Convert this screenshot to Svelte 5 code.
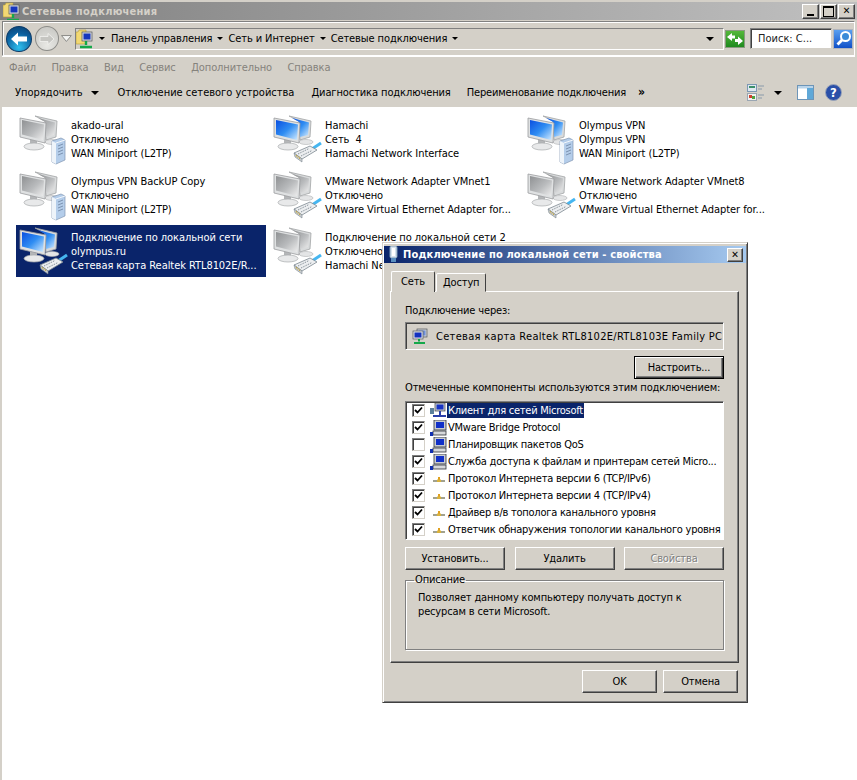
<script>
  const adapters = [
    { lines: ['akado-ural', 'Отключено', 'WAN Miniport (L2TP)'], active: false, badge: 'server' },
    { lines: ['Hamachi', 'Сеть  4', 'Hamachi Network Interface'], active: true, badge: 'cable' },
    { lines: ['Olympus VPN', 'Olympus VPN', 'WAN Miniport (L2TP)'], active: true, badge: 'server' },
    { lines: ['Olympus VPN BackUP Copy', 'Отключено', 'WAN Miniport (L2TP)'], active: false, badge: 'server' },
    { lines: ['VMware Network Adapter VMnet1', 'Отключено', 'VMware Virtual Ethernet Adapter for...'], active: false, badge: 'cable' },
    { lines: ['VMware Network Adapter VMnet8', 'Отключено', 'VMware Virtual Ethernet Adapter for...'], active: false, badge: 'cable' },
    { lines: ['Подключение по локальной сети', 'olympus.ru', 'Сетевая карта Realtek RTL8102E/R...'], active: true, badge: 'cable', selected: true },
    { lines: ['Подключение по локальной сети 2', 'Отключено', 'Hamachi Network Interface'], active: false, badge: 'cable' }
  ];

  const components = [
    { name: 'Клиент для сетей Microsoft', on: true, icon: 'client', selected: true },
    { name: 'VMware Bridge Protocol', on: true, icon: 'pc' },
    { name: 'Планировщик пакетов QoS', on: false, icon: 'pc' },
    { name: 'Служба доступа к файлам и принтерам сетей Micro...', on: true, icon: 'pc' },
    { name: 'Протокол Интернета версии 6 (TCP/IPv6)', on: true, icon: 'proto' },
    { name: 'Протокол Интернета версии 4 (TCP/IPv4)', on: true, icon: 'proto' },
    { name: 'Драйвер в/в тополога канального уровня', on: true, icon: 'proto' },
    { name: 'Ответчик обнаружения топологии канального уровня', on: true, icon: 'proto' }
  ];

  const menu = ['Файл', 'Правка', 'Вид', 'Сервис', 'Дополнительно', 'Справка'];
  const crumbs = ['Панель управления', 'Сеть и Интернет', 'Сетевые подключения'];
</script>

{#snippet netIcon(active, badge, id)}
  <svg class="net-icon" width="54" height="52" viewBox="0 0 54 52">
    <defs>
      <linearGradient id={id} x1="0" y1="0" x2="1" y2="1">
        <stop offset="0" stop-color="#0a4fe0" />
        <stop offset=".5" stop-color="#2f8df2" />
        <stop offset="1" stop-color="#d5ecff" />
      </linearGradient>
    </defs>
    <!-- back monitor -->
    <path d="M19 3 L41 8 L40 24 L30 27 L29 8 Z" fill="#d9dbdc" stroke="#a2a4a6" stroke-width=".8" />
    <path d="M22 5 L39 9.500 L38 22 L30 24 L29 9 Z" fill={active ? `url(#${id})` : 'url(#scrGrey)'} />
    <ellipse cx="36" cy="29" rx="7" ry="2.500" fill="#e4e5e6" stroke="#b0b2b4" stroke-width=".6" />
    <!-- front monitor -->
    <path d="M14 26 L21 28 L21 32 L14 31 Z" fill="#b4b6b8" />
    <ellipse cx="18" cy="33.500" rx="10" ry="3.500" fill="#e8e9ea" stroke="#a8aaac" stroke-width=".7" />
    <path d="M4 5 L30 10 L29 30 L4 24 Z" fill="#dfe1e2" stroke="#9a9c9e" stroke-width=".8" />
    <path d="M6 7 L28 11.500 L27 27 L6 21.500 Z" fill={active ? `url(#${id})` : 'url(#scrGrey)'} />
    {#if badge === 'server'}
      <path d="M36 28 L45 25 L49 27 L49 47 L40 51 L36 49 Z" fill="#b4cdea" stroke="#8297b2" stroke-width=".7" />
      <path d="M36 28 L40 30 L40 51 L36 49 Z" fill="#eef4fa" />
      <path d="M40 30 L49 27" stroke="#f2f6fb" stroke-width="1" />
      <path d="M42 33 L47 31 M42 36 L47 34 M42 39 L47 37 M42 42 L47 40" stroke="#7b92b0" stroke-width="1" />
    {:else}
      <path d="M42 36 L51 30" stroke="#46b6f0" stroke-width="3" fill="none" />
      <path d="M24 40 L40 33 L47 37 L32 46 Z" fill="#eceef0" stroke="#7c8890" stroke-width=".8" />
      <path d="M24 40 L32 46 L32 49 L25 44 Z" fill="#c9cdd0" stroke="#7c8890" stroke-width=".6" />
      <path d="M28 41 L39 35.500 M31 43 L42 37.500" stroke="#8a949c" stroke-width="1" stroke-dasharray="1.500 1" />
      <path d="M26 42.500 L30 45.500" stroke="#c9a52c" stroke-width="1.400" stroke-dasharray="1 1" />
    {/if}
  </svg>
{/snippet}

{#snippet smallNet(size)}
  <svg width={size} height={size} viewBox="0 0 16 16">
    <rect x="5" y="1" width="10" height="8" fill="#c9cdd2" stroke="#55595e" stroke-width=".7" />
    <rect x="6.500" y="2.500" width="7" height="5" fill="#6f8fd8" />
    <rect x="1" y="3" width="10" height="8" fill="#e2e4e6" stroke="#55595e" stroke-width=".7" />
    <rect x="2.500" y="4.500" width="7" height="5" fill="#1330c0" />
    <path d="M7 11 V13.500 M2 15 H13" stroke="#15a84a" stroke-width="2" />
  </svg>
{/snippet}

{#snippet folderNet()}
  <svg width="17" height="21" viewBox="0 0 17 21">
    <path d="M0 3 H2 L3 1 H10 V15 H0 Z" fill="#f2d873" stroke="#b39a3a" stroke-width=".6" />
    <rect x="6" y="3" width="10" height="9" fill="#d8dade" stroke="#50545a" stroke-width=".7" />
    <rect x="7.500" y="4.500" width="7" height="6" fill="#1636bd" />
    <path d="M10 12 V16 M4 18 H16" stroke="#15a84a" stroke-width="2.400" />
  </svg>
{/snippet}

{#snippet rowIcon(kind)}
  {#if kind === 'client'}
    <svg width="17" height="16" viewBox="0 0 17 16">
      <rect x="0" y="5" width="4" height="6" fill="#5b7f9a" />
      <rect x="5" y="0" width="10" height="8" fill="#c7ccd3" stroke="#3c4048" stroke-width=".7" />
      <rect x="6.500" y="1.500" width="7" height="5" fill="#1733c4" />
      <path d="M10 8 V12 M3 13 H16" stroke="#2a3fa8" stroke-width="2" />
    </svg>
  {:else if kind === 'pc'}
    <svg width="17" height="16" viewBox="0 0 17 16">
      <rect x="4" y="0" width="12" height="10" fill="#c9ccd0" stroke="#30343a" stroke-width=".8" />
      <rect x="6" y="2" width="8" height="6" fill="#1130c8" />
      <rect x="3" y="11" width="13" height="4" fill="#d6d8da" stroke="#30343a" stroke-width=".8" />
      <rect x="0" y="12" width="3" height="4" fill="#1130b0" />
    </svg>
  {:else}
    <svg width="17" height="16" viewBox="0 0 17 16">
      <path d="M3 10 H15" stroke="#8a8a72" stroke-width="1.600" />
      <path d="M9 6 V9" stroke="#e0a020" stroke-width="2" />
      <rect x="7" y="8.500" width="4" height="2.500" fill="#d9b23c" />
    </svg>
  {/if}
{/snippet}

<svg class="defs" width="0" height="0">
  <defs>
    <linearGradient id="scrGrey" x1="0" y1="0" x2="1" y2="1">
      <stop offset="0" stop-color="#8f9193" />
      <stop offset=".55" stop-color="#b9bbbd" />
      <stop offset="1" stop-color="#eeeeee" />
    </linearGradient>
  </defs>
</svg>

<div class="window">
  <header class="titlebar">
    <span class="title-icon">{@render folderNet()}</span>
    <span class="title-text">Сетевые подключения</span>
    <div class="win-btns">
      <button class="wb"><i class="min"></i></button>
      <button class="wb"><i class="max"></i></button>
      <button class="wb x">✕</button>
    </div>
  </header>

  <div class="navbar">
    <span class="round back">
      <svg width="18" height="16" viewBox="0 0 18 16"><path d="M1 8 L8 1.500 V5.500 H17 V10.500 H8 V14.500 Z" fill="#fff" /></svg>
    </span>
    <span class="round fwd">
      <svg width="16" height="14" viewBox="0 0 16 14"><path d="M15 7 L9 1.500 V4.500 H1 V9.500 H9 V12.500 Z" fill="#c6c6c2" stroke="#f2f2f0" stroke-width=".8" /></svg>
    </span>
    <svg class="hist" width="11" height="7" viewBox="0 0 11 7"><path d="M.5 .5 H10.500 L5.500 6.500 Z" fill="#f4f4f2" stroke="#8a8a86" /></svg>
    <div class="address">
      <span class="addr-icon">{@render folderNet()}</span>
      <span class="tri first"></span>
      {#each crumbs as c}
        <span class="crumb">{c}</span>
        <span class="tri"></span>
      {/each}
      <span class="tri end"></span>
    </div>
    <span class="go">
      <svg width="18" height="14" viewBox="0 0 18 14"><path d="M1 5 L6 1 V3.500 H9 V6.500 H6 V9 Z M17 9 L12 13 V10 H9 V7 H12 V4.500 Z" fill="#fff" /></svg>
    </span>
    <div class="search"><span>Поиск: С...</span></div>
    <span class="search-btn">
      <svg width="17" height="17" viewBox="0 0 17 17">
        <circle cx="10.500" cy="6.500" r="4.500" fill="#3a8ad8" stroke="#fff" stroke-width="2" />
        <path d="M7 10 L2.500 14.500" stroke="#fff" stroke-width="2.800" />
      </svg>
    </span>
  </div>

  <nav class="menu">
    {#each menu as m}<span>{m}</span>{/each}
  </nav>

  <div class="toolbar">
    <span class="tool organize">Упорядочить</span>
    <span class="tri big"></span>
    <span class="tool t-off">Отключение сетевого устройства</span>
    <span class="tool t-diag">Диагностика подключения</span>
    <span class="tool t-ren">Переименование подключения</span>
    <span class="more">»</span>
    <div class="tool-right">
      <svg width="17" height="17" viewBox="0 0 17 17">
        <rect x=".5" y=".5" width="9" height="7" fill="#dfe8f0" stroke="#7c98b4" />
        <rect x="2" y="2" width="6" height="2" fill="#3a8f6a" />
        <rect x=".5" y="9.500" width="9" height="7" fill="#f2f2f2" stroke="#9aa6b2" />
        <rect x="2" y="11" width="3" height="3" fill="#d04030" />
        <rect x="5" y="12" width="3" height="3" fill="#50a040" />
        <path d="M11 2 H17 M11 5 H15 M11 11 H17 M11 14 H15" stroke="#8a9aaa" />
      </svg>
      <span class="tri big view"></span>
      <svg class="pane" width="17" height="15" viewBox="0 0 17 15">
        <rect x=".5" y=".5" width="16" height="14" fill="#fff" stroke="#6d95b8" />
        <rect x="1" y="1" width="15" height="2.500" fill="#b9d4ea" />
        <rect x="10" y="3" width="6" height="11" fill="#5fa8d8" />
      </svg>
      <svg width="17" height="17" viewBox="0 0 17 17">
        <circle cx="8.500" cy="8.500" r="8" fill="#2a4fa8" stroke="#9aa4b8" />
        <text class="help-q" x="8.500" y="13" text-anchor="middle">?</text>
      </svg>
    </div>
  </div>

  <main class="content">
    {#each adapters as a, i}
      <div class="item" class:selected={a.selected}>
        {@render netIcon(a.active, a.badge, `scr${i}`)}
        <div class="item-text">
          {#each a.lines as l}<div class="item-line">{l}</div>{/each}
        </div>
      </div>
    {/each}
  </main>

  <section class="dialog">
    <header class="dlg-title">
      <svg width="13" height="17" viewBox="0 0 13 17">
        <rect x="3" y="0" width="7" height="12" rx="1.500" fill="#d8e4ee" stroke="#7d9ab5" />
        <rect x="5" y="2" width="3" height="8" fill="#fff" />
        <rect x="4" y="12" width="5" height="4" fill="#5a8fc0" />
      </svg>
      <span class="dlg-title-text">Подключение по локальной сети - свойства</span>
      <button class="wb x dlg-x">✕</button>
    </header>

    <div class="tabs">
      <span class="tab active">Сеть</span>
      <span class="tab">Доступ</span>
    </div>

    <div class="panel">
      <div class="lbl">Подключение через:</div>
      <div class="device">
        {@render smallNet(16)}
        <span class="device-name">Сетевая карта Realtek RTL8102E/RTL8103E Family PC</span>
      </div>
      <div class="cfg-row"><button class="btn default">Настроить...</button></div>
      <div class="lbl comps">Отмеченные компоненты используются этим подключением:</div>
      <div class="list">
        {#each components as c}
          <div class="row">
            <span class="check">
              {#if c.on}
                <svg width="9" height="9" viewBox="0 0 9 9"><path d="M1 4 L3.500 6.500 L8 1.500" fill="none" stroke="#000" stroke-width="1.800" /></svg>
              {/if}
            </span>
            <span class="row-icon">{@render rowIcon(c.icon)}</span>
            <span class="row-name" class:hl={c.selected}>{c.name}</span>
          </div>
        {/each}
      </div>
      <div class="btn-row">
        <button class="btn">Установить...</button>
        <button class="btn">Удалить</button>
        <button class="btn disabled">Свойства</button>
      </div>
      <fieldset class="group">
        <legend>Описание</legend>
        <p>Позволяет данному компьютеру получать доступ к ресурсам в сети Microsoft.</p>
      </fieldset>
    </div>

    <footer class="dlg-foot">
      <button class="btn foot">OK</button>
      <button class="btn foot">Отмена</button>
    </footer>
  </section>
</div>

<style>
  :global(body) {
    margin: 0;
    background: #fff;
  }
  .defs {
    position: absolute;
  }
  .window {
    position: relative;
    width: 857px;
    height: 780px;
    overflow: hidden;
    display: flex;
    flex-direction: column;
    background: #d4d0c8;
    box-sizing: border-box;
    padding: 2px 2px 0;
    font-family: "DejaVu Sans Condensed", "DejaVu Sans", sans-serif;
    font-stretch: condensed;
    font-size: 11px;
    color: #000;
  }
  button {
    font: inherit;
    letter-spacing: inherit;
    padding: 0;
    margin: 0;
  }

  /* title bar */
  .titlebar {
    height: 18px;
    margin: 0 -2px 0 -2px;
    padding: 0 2px;
    display: flex;
    align-items: center;
    background: linear-gradient(90deg, #808080, #c0c0c0);
    flex-shrink: 0;
  }
  .title-icon {
    display: flex;
    margin-left: 1px;
    height: 18px;
    overflow: hidden;
  }
  .title-text {
    margin-left: 2px;
    color: #d4d0c8;
    font-weight: 700;
    font-size: 11px;
    letter-spacing: .25px;
  }
  .win-btns {
    margin-left: auto;
    display: flex;
    gap: 1px;
  }
  .wb {
    width: 17px;
    height: 15px;
    box-sizing: border-box;
    background: #d4d0c8;
    border: 1px solid;
    border-color: #fff #404040 #404040 #fff;
    box-shadow: inset -1px -1px 0 #808080;
    display: flex;
    align-items: center;
    justify-content: center;
    font-size: 10px;
    font-weight: 700;
    line-height: 1;
  }
  .wb .min {
    width: 7px;
    height: 2px;
    background: #000;
    margin-top: 7px;
  }
  .wb .max {
    width: 9px;
    height: 8px;
    border: 1px solid #000;
    border-top-width: 2px;
    box-sizing: content-box;
  }

  /* nav */
  .navbar {
    height: 35px;
    margin: 1px 0;
    box-sizing: border-box;
    border: 1px solid #808080;
    border-bottom-color: #fff;
    border-right-color: #fff;
    box-shadow: inset 1px 1px 0 #fff, 0 1px 0 #fff;
    display: flex;
    align-items: center;
    padding: 0 1px 0 3px;
    flex-shrink: 0;
  }
  .round {
    border-radius: 50%;
    display: flex;
    align-items: center;
    justify-content: center;
    box-sizing: border-box;
  }
  .back {
    width: 26px;
    height: 26px;
    background: radial-gradient(circle at 50% 85%, #2fc0ee, #0b5f9e 60%, #0a3f70);
    border: 1px solid #0a3a68;
  }
  .fwd {
    width: 25px;
    height: 25px;
    margin-left: 3px;
    background: radial-gradient(circle at 50% 80%, #e8e8e4, #c4c4c0);
    border: 1px solid #8c8c88;
  }
  .hist {
    margin-left: 2px;
  }
  .address {
    margin-left: 3px;
    width: 649px;
    height: 22px;
    box-sizing: border-box;
    border: 1px solid #808080;
    border-right-color: #fff;
    border-bottom-color: #fff;
    display: flex;
    align-items: center;
    flex-shrink: 0;
    letter-spacing: -.1px;
  }
  .addr-icon {
    display: flex;
    height: 20px;
    overflow: hidden;
    margin-top: 1px;
  }
  .tri {
    width: 0;
    height: 0;
    flex-shrink: 0;
    border-style: solid;
    border-width: 3px 3px 0;
    border-color: #000 transparent transparent;
    margin: 0 5px;
  }
  .tri.first {
    margin-left: 6px;
    margin-right: 6px;
  }
  .tri.end {
    margin-left: auto;
    margin-right: 9px;
    border-width: 4px 4.500px 0;
  }
  .tri.big {
    border-width: 4px 4px 0;
  }
  .go {
    width: 20px;
    height: 18px;
    margin-left: 1px;
    box-sizing: border-box;
    border: 1px solid #8a9a80;
    background: linear-gradient(#55b83a, #1e8a1e);
    display: flex;
    align-items: center;
    justify-content: center;
    flex-shrink: 0;
  }
  .search {
    margin-left: 5px;
    width: 82px;
    height: 21px;
    box-sizing: border-box;
    background: #fff;
    border: 1px solid #808080;
    border-right-color: #d4d0c8;
    border-bottom-color: #d4d0c8;
    box-shadow: inset 1px 1px 0 #404040;
    display: flex;
    align-items: center;
    padding-left: 7px;
    flex-shrink: 0;
    color: #222;
  }
  .search-btn {
    width: 20px;
    height: 20px;
    margin-left: 1px;
    border: 1px solid #b0b4bc;
    box-sizing: border-box;
    background: linear-gradient(#5aa0f0, #0f50c8);
    display: flex;
    align-items: center;
    justify-content: center;
    flex-shrink: 0;
  }

  /* menu and toolbar */
  .menu {
    height: 21px;
    display: flex;
    align-items: center;
    gap: 15.500px;
    padding-left: 7px;
    color: #85827c;
    letter-spacing: -.1px;
    flex-shrink: 0;
  }
  .toolbar {
    height: 29px;
    display: flex;
    align-items: center;
    padding-left: 13px;
    flex-shrink: 0;
  }
  .tool {
    white-space: nowrap;
  }
  .organize + .tri {
    margin: 0 0 0 8px;
  }
  .t-off {
    margin-left: 19px;
  }
  .t-diag {
    margin-left: 17px;
    letter-spacing: -.1px;
  }
  .t-ren {
    margin-left: 16px;
    letter-spacing: -.15px;
  }
  .more {
    margin-left: 12px;
    font-weight: 700;
    font-size: 12px;
    margin-top: -2px;
  }
  .tool-right {
    margin-left: auto;
    margin-right: 13px;
    display: flex;
    align-items: center;
  }
  .tri.view {
    margin: 0 15px 0 10px;
  }
  .pane {
    margin-right: 11px;
  }
  .help-q {
    font-size: 13px;
    font-weight: 700;
    fill: #fff;
  }

  /* adapters */
  .content {
    flex: 1;
    margin-right: -2px;
    background: #fff;
    display: grid;
    grid-template-columns: repeat(3, 250px);
    grid-auto-rows: 52px;
    gap: 4px;
    padding: 6px 0 0 14px;
    align-content: start;
  }
  .item {
    display: flex;
    align-items: center;
    white-space: pre;
    letter-spacing: -.06px;
  }
  .item.selected {
    background: #0a246a;
    color: #fff;
  }
  .net-icon {
    flex-shrink: 0;
    margin-right: 1px;
  }
  .item-text {
    margin-top: 2px;
  }
  .item-line {
    height: 14px;
    line-height: 14px;
  }

  /* dialog */
  .dialog {
    position: absolute;
    left: 382px;
    top: 242px;
    width: 366px;
    height: 461px;
    box-sizing: border-box;
    background: #d4d0c8;
    border: 1px solid;
    border-color: #d4d0c8 #404040 #404040 #d4d0c8;
    box-shadow: inset 1px 1px 0 #fff, inset -1px -1px 0 #808080;
    padding: 3px 1px 0;
    display: flex;
    flex-direction: column;
    letter-spacing: -.15px;
  }
  .dlg-title {
    height: 17px;
    display: flex;
    align-items: center;
    background: linear-gradient(90deg, #0a246a, #a6caf0);
    color: #fff;
    flex-shrink: 0;
    padding-left: 3px;
  }
  .dlg-title-text {
    font-weight: 700;
    margin-left: 3px;
    white-space: nowrap;
    letter-spacing: .15px;
  }
  .dlg-x {
    margin-left: auto;
    margin-right: 3px;
    width: 16px;
    height: 14px;
    color: #000;
  }
  .tabs {
    display: flex;
    align-items: flex-end;
    height: 20px;
    margin: 9px 0 -1px 7px;
    position: relative;
    z-index: 1;
    flex-shrink: 0;
  }
  .tab {
    height: 19px;
    padding: 0 6px;
    box-sizing: border-box;
    background: #d4d0c8;
    border: 1px solid;
    border-color: #fff #404040 transparent #fff;
    border-radius: 2px 2px 0 0;
    display: flex;
    align-items: center;
  }
  .tab.active {
    height: 21px;
    width: 44px;
    justify-content: center;
    padding-bottom: 2px;
    border-bottom: 0;
    margin-right: 1px;
  }
  .panel {
    margin: 0 7px 0 6px;
    height: 372px;
    box-sizing: border-box;
    border: 1px solid;
    border-color: #fff #404040 #404040 #fff;
    box-shadow: inset -1px -1px 0 #808080;
    padding: 12px 14px 0;
    display: flex;
    flex-direction: column;
    flex-shrink: 0;
  }
  .lbl {
    height: 14px;
    line-height: 14px;
    white-space: nowrap;
    margin-bottom: 4px;
  }
  .device {
    height: 28px;
    box-sizing: border-box;
    border: 1px solid;
    border-color: #808080 #fff #fff #808080;
    box-shadow: inset 1px 1px 0 #404040;
    display: flex;
    align-items: center;
    padding-left: 6px;
    overflow: hidden;
    flex-shrink: 0;
  }
  .device-name {
    margin-left: 8px;
    white-space: nowrap;
    flex-shrink: 0;
    letter-spacing: .3px;
  }
  .cfg-row {
    display: flex;
    justify-content: flex-end;
    margin-top: 6px;
  }
  .btn {
    height: 23px;
    box-sizing: border-box;
    background: #d4d0c8;
    color: #000;
    border: 1px solid;
    border-color: #fff #404040 #404040 #fff;
    box-shadow: inset -1px -1px 0 #808080;
    text-align: center;
  }
  .cfg-row .btn {
    width: 90px;
  }
  .btn.default {
    border-color: #000;
    box-shadow: inset 1px 1px 0 #fff, inset -1px -1px 0 #404040, inset -2px -2px 0 #808080;
  }
  .lbl.comps {
    margin: 2px 0 6px;
  }
  .list {
    height: 139px;
    box-sizing: border-box;
    background: #fff;
    border: 1px solid;
    border-color: #808080 #fff #fff #808080;
    box-shadow: inset 1px 1px 0 #404040;
    flex-shrink: 0;
    overflow: hidden;
    letter-spacing: -.25px;
  }
  .row {
    height: 17px;
    display: flex;
    align-items: center;
    white-space: nowrap;
  }
  .check {
    width: 13px;
    height: 13px;
    margin-left: 6px;
    box-sizing: border-box;
    border: 1px solid;
    border-color: #808080 #d4d0c8 #d4d0c8 #808080;
    box-shadow: inset 1px 1px 0 #404040;
    background: #fff;
    display: flex;
    align-items: center;
    justify-content: center;
    flex-shrink: 0;
  }
  .row-icon {
    width: 17px;
    height: 16px;
    margin-left: 5px;
    flex-shrink: 0;
  }
  .row-name {
    padding: 0 1px;
    line-height: 15px;
  }
  .row-name.hl {
    background: #0a246a;
    color: #fff;
  }
  .btn-row {
    display: flex;
    justify-content: space-between;
    margin-top: 7px;
  }
  .btn-row .btn {
    width: 100px;
  }
  .btn.disabled {
    color: #808080;
    text-shadow: 1px 1px 0 #fff;
  }
  .group {
    margin: 4px 0 0;
    padding: 5px 12px 0;
    height: 76px;
    box-sizing: border-box;
    border: 1px solid #808080;
    box-shadow: 1px 1px 0 #fff, inset 1px 1px 0 #fff;
    min-inline-size: 0;
  }
  .group legend {
    padding: 0 1px;
    margin-left: -4px;
    line-height: 12px;
  }
  .group p {
    margin: 0;
    line-height: 14px;
    width: 290px;
  }
  .dlg-foot {
    display: flex;
    justify-content: flex-end;
    gap: 6px;
    margin: 7px 8px 0 0;
  }
  .foot {
    width: 75px;
  }
</style>
